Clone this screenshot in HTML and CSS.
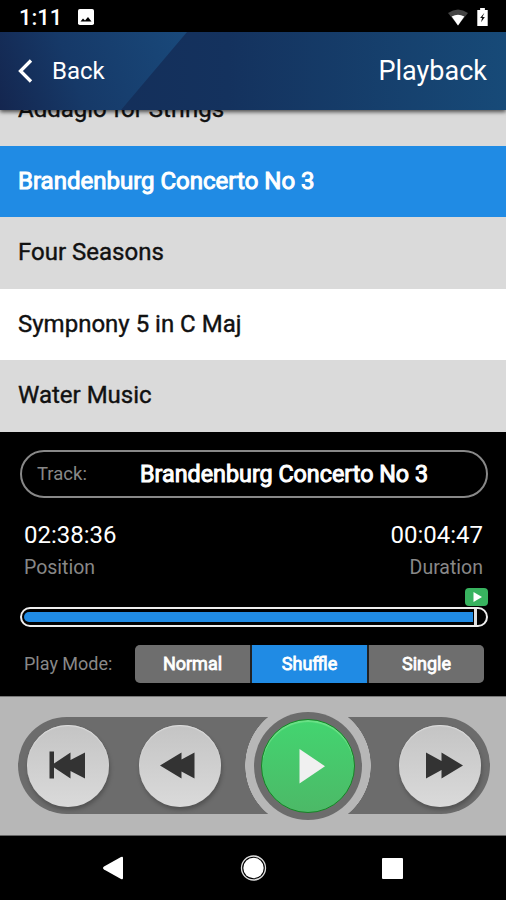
FILE: index.html
```
<!DOCTYPE html>
<html lang="en">
<head>
<meta charset="utf-8">
<title>Playback</title>
<link rel="stylesheet" href="styles.css">
</head>
<body>
<div class="status">
  <span class="clock">1:11</span>
  <svg class="photo" width="16" height="16" viewBox="0 0 16 16"><rect width="16" height="16" rx="1.8" fill="#fff"/><path d="M2.5 12.5 5 9.5 7 11.5 10 8 13.5 12.5Z" fill="#000"/></svg>
  <svg class="wifi" width="20" height="17" viewBox="0 0 20 17"><path d="M0 4Q10-3 20 4L10 16.5Z" fill="#444"/><path d="M3.7 7.5Q10 3.800 16.300 7.500L10 16.500Z" fill="#fff"/></svg>
  <svg class="battery" width="11" height="18" viewBox="0 0 11 19"><path d="M3 0H8V2H11V19H0V2H3Z" fill="#fff"/><path d="M7.500 5 3 10.500H5L4 15 8 9.500H5.500Z" fill="#111"/></svg>
</div>
<header class="header">
  <svg class="chevron" width="16" height="24" viewBox="0 0 16 24"><path d="M14 1.500 3.500 12 14 22.500" fill="none" stroke="#fff" stroke-width="3.300"/></svg>
  <span class="back">Back</span>
  <h1 class="title">Playback</h1>
</header>
<ul class="tracks">
  <li class="first"><span>Addagio for Strings</span></li>
  <li class="selected"><span>Brandenburg Concerto No 3</span></li>
  <li><span>Four Seasons</span></li>
  <li class="white"><span>Sympnony 5 in C Maj</span></li>
  <li><span>Water Music</span></li>
</ul>
<section class="panel">
  <div class="track"><span class="label">Track:</span><span class="name">Brandenburg Concerto No 3</span></div>
  <div class="times">
    <div><div class="time">02:38:36</div><div class="label">Position</div></div>
    <div class="right"><div class="time">00:04:47</div><div class="label">Duration</div></div>
  </div>
  <svg class="flag" width="23" height="18" viewBox="0 0 23 18"><rect width="23" height="18" rx="4" fill="#38b35f"/><path d="M8.500 4V14L17 9Z" fill="#fff"/></svg>
  <div class="bar"><div class="fill"></div><div class="end"></div></div>
  <div class="modes">
    <span class="label">Play Mode:</span>
    <div class="segments"><span>Normal</span><span class="active">Shuffle</span><span>Single</span></div>
  </div>
</section>
<section class="controls">
  <div class="pill">
    <div class="round"><svg width="82" height="82" viewBox="0 0 82 82"><path d="M22.500 26.500H27V38.500L43.500 27.500V35L58 27.500V53.500L43.500 46V53.500L27 42.500V53.500H22.500Z" fill="#333"/></svg></div>
    <div class="round rewind"><svg width="82" height="82" viewBox="0 0 82 82"><path d="M21 40.500 42.500 27.500V34.500L55.500 27.500V53.500L42.500 46.500V53.500Z" fill="#333"/></svg></div>
    <div class="halo"><div class="ring"><div class="play"><svg width="94" height="94" viewBox="0 0 94 94"><path d="M38.500 30V64.500L64 47.200Z" fill="#f0f0f0"/></svg></div></div></div>
    <div class="round forward"><svg width="82" height="82" viewBox="0 0 82 82"><path d="M27 27.500 42.500 36V27.500L64 40.500 42.500 53.500V45L27 53.500Z" fill="#333"/></svg></div>
  </div>
</section>
<nav class="nav">
  <svg width="506" height="64" viewBox="0 0 506 64"><path d="M123 22V42Q123 44 121 43L104 33.500Q102 32 104 30.500L121 21Q123 20 123 22Z" fill="#fff"/><circle cx="253.500" cy="32" r="12" fill="none" stroke="#ddd" stroke-width="1.300"/><circle cx="253.500" cy="32" r="10.200" fill="#fff"/><rect x="382" y="22" width="21" height="21" rx="1" fill="#fff"/></svg>
</nav>
</body>
</html>
```

FILE: styles.css
```
* { box-sizing: border-box; }
body { margin: 0; width: 506px; height: 900px; overflow: hidden; background: #000; color: #fff; font-family: Roboto, "Liberation Sans", sans-serif; display: flex; flex-direction: column; }
.status { height: 32px; flex: none; display: flex; align-items: center; padding: 0 18px 0 19px; }
.clock { font-size: 22px; font-weight: 500; line-height: 34px; padding-top: 3px; width: 43px; }
.photo { margin: 2px 0 0 16px; }
.wifi { margin: 2px 9px 0 auto; }
.battery { margin-top: 2px; }
.header { height: 78px; flex: none; display: flex; align-items: center; padding: 0 19px 0 17px; position: relative; z-index: 1; box-shadow: 0 2px 4px rgba(0,0,0,.65);
  background: linear-gradient(90deg, #142c57 0%, #14325e 45%, #174a78 100%); }
.header::before { content: ""; position: absolute; inset: 0; clip-path: polygon(0 0, 187px 0, 121px 100%, 0 100%); background: linear-gradient(70deg, #14264f 0%, #163968 16%, #194a7c 42%); }
.header > * { position: relative; }
.back { font-size: 24px; margin-left: 19px; }
.title { margin: 0 0 0 auto; font-size: 27px; font-weight: 400; line-height: 30px; padding-bottom: 1px; }
.tracks { list-style: none; margin: 0; padding: 0; height: 322px; flex: none; overflow: hidden; display: flex; flex-direction: column; color: #111; font-size: 24px; }
.tracks li { height: 71.600px; flex: none; display: flex; align-items: center; padding: 0 18px 2px; background: #dadada; -webkit-text-stroke: .4px; }
.tracks .first { margin-top: -35.900px; }
.tracks .selected { background: #208be4; color: #fff; -webkit-text-stroke: 1px; }
.tracks .white { background: #fff; }
.panel { height: 264px; flex: none; padding: 18px 18px 0 20px; display: flex; flex-direction: column; }
.label { color: #888; font-size: 19.500px; line-height: 24px; }
.track { height: 48px; border: 2px solid #888; border-radius: 24px; display: flex; align-items: center; padding: 0 58px 0 15px; }
.track .label { font-size: 18.500px; }
.name { margin-left: auto; font-size: 23.300px; -webkit-text-stroke: 1px; }
.times { display: flex; justify-content: space-between; padding: 21px 5px 0 4px; }
.time { font-size: 24px; line-height: 32px; }
.times .label { line-height: 33px; height: 32px; }
.right { text-align: right; }
.flag { align-self: flex-end; margin-top: 5px; }
.bar { height: 20px; margin-top: 1px; border: 2.500px solid #eee; border-radius: 10px; padding: 3px 2px; display: flex; }
.fill { width: 449px; background: #208be4; border-radius: 6px 0 0 6px; height: 10px; }
.end { width: 3px; height: 16px; margin: -3px 0 0 1px; background: #ddd; }
.modes { display: flex; justify-content: space-between; align-items: center; margin-top: 18px; padding: 0 4px; }
.modes .label { font-size: 18px; }
.segments { display: grid; grid-template-columns: repeat(3, 1fr); gap: 2px; width: 349px; height: 38px; border-radius: 5px; overflow: hidden; background: #222; }
.segments span { background: #6e6e6e; display: flex; align-items: center; justify-content: center; padding-bottom: 2px; font-size: 18px; -webkit-text-stroke: .8px; }
.segments .active { background: #208be4; }
.controls { height: 140px; flex: none; background: #b7b7b7; padding: 20px 16px 0 18px; border-bottom: 1px solid #666; border-top: 1px solid #777; }
.pill { height: 97px; border-radius: 49px; background: #6c6c6c; display: flex; align-items: center; padding-left: 9px; }
.round { width: 82px; height: 82px; flex: none; border-radius: 50%; background: linear-gradient(#c4c4c4, #dadada); box-shadow: 1px 3px 4px rgba(0,0,0,.25), inset 0 1px 1px #ddd; }
.rewind { margin-left: 30px; }
.halo { width: 126px; height: 97px; flex: none; margin-left: 24px; display: grid; place-items: center; background: radial-gradient(circle at center, #b7b7b7 62.500px, transparent 63px); }
.ring { width: 108px; height: 108px; margin: -6px 0; border-radius: 50%; background: #6c6c6c; display: grid; place-items: center; }
.play { width: 94px; height: 94px; border-radius: 50%; border: 1.500px solid #168425; background: linear-gradient(#43d570, #4cb967); overflow: hidden; box-shadow: inset 0 2px 1px rgba(150,240,160,.5); }
.play svg { display: block; margin: -1px; }
.forward { margin-left: 28px; }
.round svg { display: block; }
.nav { height: 64px; flex: none; }
.nav svg { display: block; }
```
